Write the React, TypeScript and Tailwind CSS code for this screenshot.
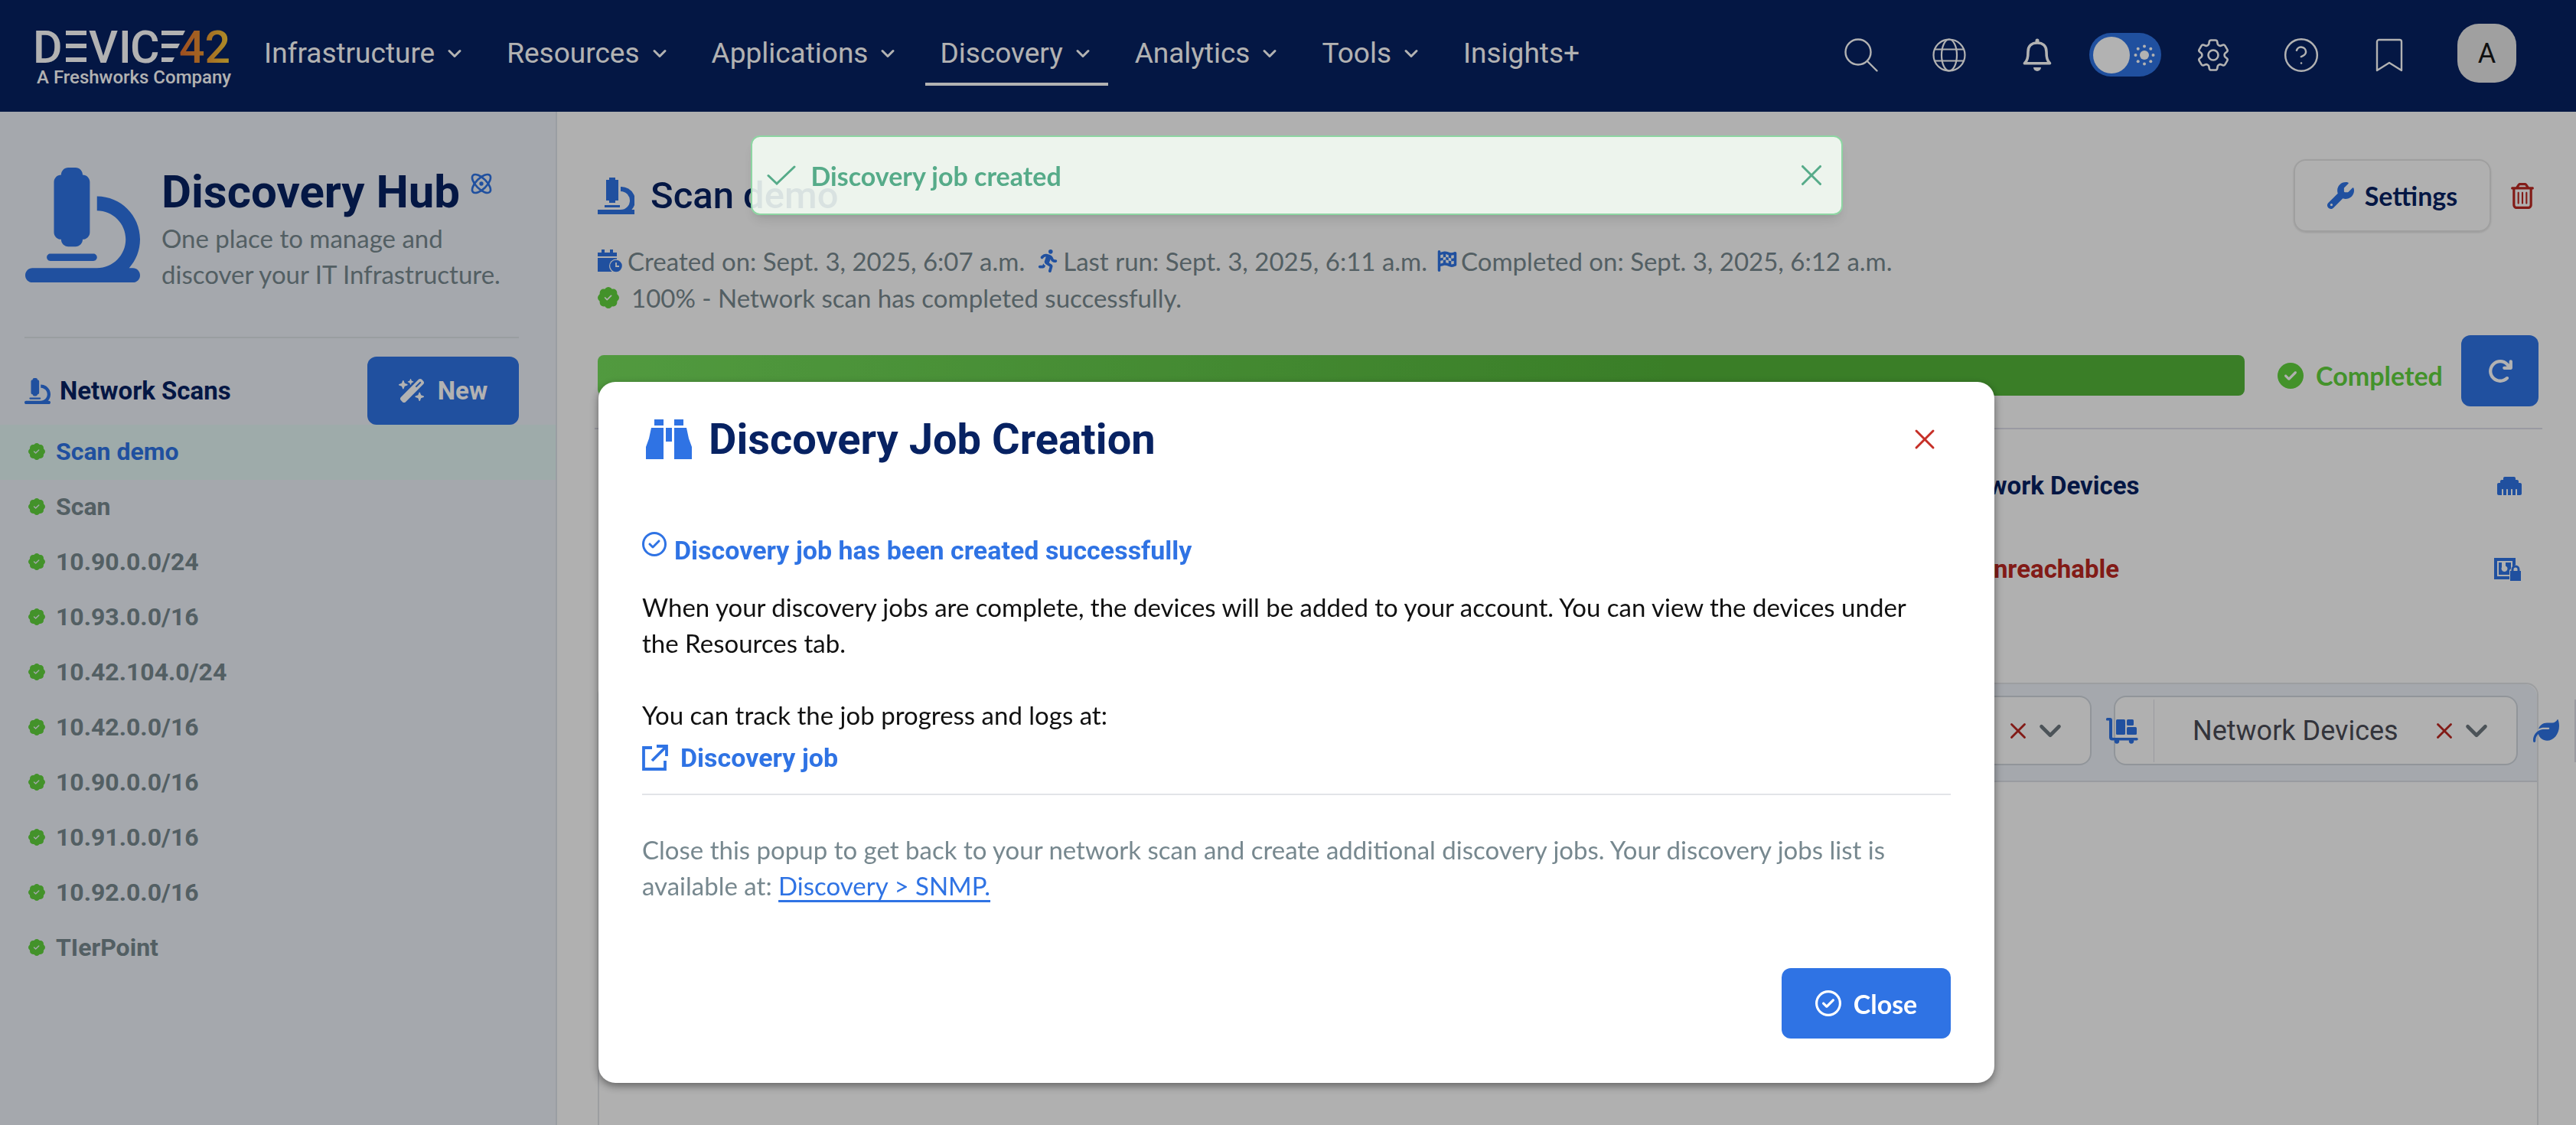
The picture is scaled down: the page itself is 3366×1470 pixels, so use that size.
import React from "react";
import type { ReactNode } from "react";
import { Atom, ChevronDown, CircleQuestionMark, X } from "lucide-react";
import {
  FaArrowRotateRight,
  FaCircleCheck,
  FaEthernet,
  FaFlagCheckered,
  FaLeaf,
  FaMicroscope,
  FaPersonRunning,
  FaRegCircleCheck,
  FaRegTrashCan,
  FaWandMagicSparkles,
  FaWrench,
} from "react-icons/fa6";
import { BsPatchCheckFill } from "react-icons/bs";
import { HiOutlineCog6Tooth } from "react-icons/hi2";

type IconProps = { className?: string };

function Logo() {
  return (
    <svg className="h-[44px] w-[252px] overflow-visible" viewBox="0 0 252 44" fill="#fff" role="img" aria-label="Device42">
      <defs>
        <linearGradient id="logo-warm" x1="0" y1="0" x2="1" y2="0">
          <stop offset="0" stopColor="#e5702f" />
          <stop offset="0.500" stopColor="#ea9632" />
          <stop offset="1" stopColor="#fbcf3a" />
        </linearGradient>
      </defs>
      <g fontFamily="Roboto, sans-serif" fontWeight="500" fontSize="59">
        <text x="-5" y="43">D</text>
        <text x="68" y="43">V</text>
        <text x="107" y="43">I</text>
        <text x="122" y="43">C</text>
        <text x="186" y="43" fill="url(#logo-warm)">42</text>
      </g>
      <path d="M38 1h27v6H38zM38 18h27v6H38zM38 36h27v6H38z" />
      <path d="M163 1h31l-3 6h-28zM163 18h24l-3 6h-21zM163 36h17l-3 6h-14z" />
    </svg>
  );
}

function SearchIcon() {
  return (
    <svg className="size-11" viewBox="0 0 44 44" fill="none" stroke="currentColor" strokeWidth="2.4" strokeLinecap="round">
      <circle cx="18" cy="18" r="16.5" />
      <path d="M30 30l12.500 12.500" />
    </svg>
  );
}

function GlobeIcon() {
  return (
    <svg className="size-11" viewBox="0 0 44 44" fill="none" stroke="currentColor" strokeWidth="2.200">
      <circle cx="22" cy="22" r="20.500" />
      <ellipse cx="22" cy="22" rx="10" ry="20.500" />
      <path d="M3 14.500h38M3 29.500h38" />
    </svg>
  );
}

function BellIcon() {
  return (
    <svg className="h-11 w-[38px]" viewBox="0 0 38 44" fill="none" stroke="currentColor">
      <path d="M2.500 32.800h33c-3.500-4-4.500-7-4.500-15.300C31 10 26 6 19 6S7 10 7 17.500c0 8.300-1 11.300-4.500 15.300z" strokeWidth="3.600" strokeLinejoin="round" />
      <path d="M16.500 5V3a2.500 2.500 0 0 1 5 0v2z" fill="currentColor" stroke="none" />
      <path d="M14 38h10a5 5 0 0 1-10 0z" fill="currentColor" stroke="none" />
    </svg>
  );
}

function SunIcon() {
  return (
    <svg className="size-7" viewBox="0 0 28 28" fill="currentColor">
      <circle cx="14" cy="14" r="6" />
      <circle cx="14" cy="2.500" r="2" />
      <circle cx="14" cy="25.500" r="2" />
      <circle cx="2.500" cy="14" r="2" />
      <circle cx="25.500" cy="14" r="2" />
      <circle cx="5.700" cy="5.700" r="2" />
      <circle cx="22.300" cy="5.700" r="2" />
      <circle cx="5.700" cy="22.300" r="2" />
      <circle cx="22.300" cy="22.300" r="2" />
    </svg>
  );
}

function BookmarkIcon() {
  return (
    <svg className="h-11 w-9" viewBox="0 0 36 44" fill="none" stroke="currentColor" strokeWidth="2.400" strokeLinejoin="round">
      <path d="M2 42V4.500A2.500 2.500 0 0 1 4.500 2h27A2.500 2.500 0 0 1 34 4.500V42L18 32z" />
    </svg>
  );
}

function SharpMicroscope({ className }: IconProps) {
  return (
    <svg className={className} viewBox="0 0 48 48" fill="currentColor">
      <path d="M15 0h8v3h4v27h-4v3h-8v-3h-4V3h4zM9 36h20v3H9z" />
      <path d="M30 12a18 18 0 0 1 14.400 30H48v6H0v-6h30a12 12 0 0 0 0-24z" />
    </svg>
  );
}

function CalendarClock({ className }: IconProps) {
  return (
    <svg className={className} viewBox="0 0 32 30">
      <path fill="currentColor" d="M5 0h4v4h7V0h4v4h5v5H0V4h5zM0 11h25v2a9 9 0 0 0-7.500 14.500L19 29H0z" />
      <circle cx="24" cy="21.500" r="9" fill="#fdfdfd" />
      <circle cx="24" cy="21.500" r="7.800" fill="currentColor" />
      <path d="M24 17v5h4" fill="none" stroke="#fdfdfd" strokeWidth="1.800" />
    </svg>
  );
}

function Binoculars({ className }: IconProps) {
  return (
    <svg className={className} viewBox="0 0 60 52" fill="currentColor">
      <path d="M11 0h12v8H11zM37 0h12v8H37zM7 11h16v41H0V36l4-11zM26 11h8v18h-8zM37 11h16l3 14 4 11v16H37z" />
    </svg>
  );
}

function ExternalLink({ className }: IconProps) {
  return (
    <svg className={className} viewBox="0 0 34 34" fill="none" stroke="currentColor" strokeWidth="3.800">
      <path d="M13 4H2v28h28V21M19 2h13v13M32 2L13 21" />
    </svg>
  );
}

function VaultLock({ className }: IconProps) {
  return (
    <svg className={className} viewBox="0 0 36 30" fill="currentColor">
      <path fillRule="evenodd" d="M0 0h28v9a8 8 0 0 0-4 4V4H4v20h16v4H0zM6 6h4v6a4 4 0 1 0 7 0l-2-1.500V6h7v8l-2 2v6H6z" />
      <path fillRule="evenodd" d="M21 17h1.500v-2a5.500 5.500 0 0 1 11 0v2H35v13H21zm4.500 0h5v-2a2.500 2.500 0 0 0-5 0z" />
    </svg>
  );
}

function Flatbed({ className }: IconProps) {
  return (
    <svg className={className} viewBox="0 0 42 34" fill="currentColor">
      <path d="M0 1.500A1.500 1.500 0 0 1 1.500 0H5a3 3 0 0 1 3 3v22a1 1 0 0 0 1 1h31a1.500 1.500 0 0 1 0 3.500h-4a3.200 3.200 0 1 1-6 0H17a3.200 3.200 0 1 1-6 0H8a4 4 0 0 1-4-4V3.500H1.500A1.500 1.500 0 0 1 0 1.500z" />
      <rect x="13" y="2" width="12" height="20" rx="1.500" />
      <rect x="27" y="2" width="9" height="8" rx="1.500" />
      <rect x="27" y="12" width="13" height="10" rx="1.500" />
    </svg>
  );
}

const navItems = ["Infrastructure", "Resources", "Applications", "Discovery", "Analytics", "Tools"];

function IconSlot({ label, children }: { label: string; children: ReactNode }) {
  return (
    <button type="button" aria-label={label} className="flex w-[115px] shrink-0 justify-center">
      {children}
    </button>
  );
}

function TopBar() {
  return (
    <header className="flex h-[146px] shrink-0 justify-between bg-[#072262] pr-[78px] pl-12 font-[Roboto,sans-serif] text-white shadow-[0_2px_2px_rgba(0,0,0,0.12)]">
      <div className="flex">
        <a href="#home" className="pt-[39px]">
          <Logo />
          <span className="block text-[24px] leading-[36px] font-medium">A Freshworks Company</span>
        </a>
        <nav className="flex items-start gap-4 pt-8 pl-6">
          {navItems.map((item) => (
            <a
              key={item}
              href={"#" + item}
              className={
                item === "Discovery"
                  ? "flex h-20 items-center gap-3 border-b-4 border-white px-[19px] text-[37px]"
                  : "flex h-20 items-center gap-3 border-b-4 border-transparent px-[19px] text-[37px]"
              }
            >
              {item}
              <ChevronDown className="size-7" strokeWidth={2.6} />
            </a>
          ))}
          <a href="#insights" className="flex h-20 items-center border-b-4 border-transparent px-[19px] text-[37px]">
            Insights+
          </a>
        </nav>
      </div>
      <div className="flex h-[143px] items-center">
        <IconSlot label="Search"><SearchIcon /></IconSlot>
        <IconSlot label="Language"><GlobeIcon /></IconSlot>
        <IconSlot label="Notifications"><BellIcon /></IconSlot>
        <div className="flex w-[115px] justify-center">
          <button
            type="button"
            role="switch"
            aria-checked="false"
            aria-label="Theme"
            className="flex h-[57px] w-[94px] items-center justify-between rounded-full bg-[#2f73e4] pr-2 pl-[5px]"
          >
            <span className="size-12 rounded-full bg-white" />
            <SunIcon />
          </button>
        </div>
        <IconSlot label="Settings"><HiOutlineCog6Tooth className="size-[52px]" strokeWidth={1.2} /></IconSlot>
        <IconSlot label="Help"><CircleQuestionMark className="size-[50px]" strokeWidth={1.2} /></IconSlot>
        <IconSlot label="Bookmarks"><BookmarkIcon /></IconSlot>
        <button type="button" className="mb-1 ml-8 flex size-[77px] items-center justify-center rounded-[28px] bg-[#e5e5e6] text-4xl text-[#181818]">
          A
        </button>
      </div>
    </header>
  );
}

const scans = [
  "Scan demo",
  "Scan",
  "10.90.0.0/24",
  "10.93.0.0/16",
  "10.42.104.0/24",
  "10.42.0.0/16",
  "10.90.0.0/16",
  "10.91.0.0/16",
  "10.92.0.0/16",
  "TIerPoint",
];

function Sidebar() {
  return (
    <aside className="w-[728px] shrink-0 border-r-2 border-[#dde2ea] bg-[#ecf1f8]">
      <div className="flex pt-[70px] pl-[33px]">
        <FaMicroscope className="mt-[3px] size-[150px] shrink-0 text-[#2f73e4]" />
        <div className="pl-7">
          <div className="flex items-start gap-3">
            <h1 className="font-[Roboto,sans-serif] text-[60px] leading-[70px] font-bold text-[#072262]">Discovery Hub</h1>
            <Atom className="mt-2 size-8 text-[#2f73e4]" strokeWidth={2} />
          </div>
          <p className="mt-[2px] w-[470px] text-[33px] leading-[47px] text-[#77888f]">
            One place to manage and discover your IT Infrastructure.
          </p>
        </div>
      </div>
      <hr className="mt-[58px] mr-12 ml-8 border-t-2 border-[#dce2e6]" />
      <div className="mt-6 flex items-center justify-between pr-12 pl-8">
        <h2 className="flex items-center gap-3 font-[Roboto,sans-serif] text-[33px] leading-12 font-bold text-[#072262]">
          <FaMicroscope className="size-[34px] text-[#2f73e4]" />
          Network Scans
        </h2>
        <button type="button" className="flex h-[89px] w-[198px] items-center justify-center gap-4 rounded-xl bg-[#2f73e4] font-[Roboto,sans-serif] text-[33px] font-bold text-white">
          <FaWandMagicSparkles className="size-[35px]" />
          New
        </button>
      </div>
      <ul>
        {scans.map((scan, i) => (
          <li key={scan} className={i === 0 ? "bg-[#e3f5f4] text-[#2f73e4]" : "text-[#77888f]"}>
            <a href="#scan" className="flex h-[72px] items-center gap-[14px] pb-[2px] pl-[37px] font-[Roboto,sans-serif] text-[32px] font-bold">
              <BsPatchCheckFill className="size-[22px] text-[#61d23d]" />
              {scan}
            </a>
          </li>
        ))}
      </ul>
    </aside>
  );
}

function FilterSelect({ id, icon, label }: { id: string; icon: ReactNode; label: string }) {
  return (
    <div className="relative flex h-[91px] w-[528px] shrink-0 items-center rounded-2xl border-2 border-[#d0d6dd] bg-[#fdfdfd]">
      <span className="absolute -left-3 text-[#2f73e4]">{icon}</span>
      <span className="ml-[50px] h-[82px] w-px bg-[#dddde6]" />
      <select
        id={id}
        aria-label={label}
        className="ml-[50px] w-[300px] appearance-none bg-transparent font-[Roboto,sans-serif] text-4xl text-[#4a4b55]"
      >
        <option>{label}</option>
      </select>
      <button type="button" aria-label="Clear" className="ml-3 text-[#bb2721]">
        <X className="size-[34px]" strokeWidth={2} />
      </button>
      <ChevronDown className="ml-[2px] size-[46px] text-[#6d787f]" strokeWidth={2.4} />
    </div>
  );
}

function MainContent() {
  return (
    <main className="flex min-w-0 flex-1 flex-col bg-[#fdfdfd] pt-[62px] pr-[49px] pl-[53px]">
      <div className="flex h-[95px] items-center justify-between">
        <h2 className="flex items-center gap-[21px] font-[Roboto,sans-serif] text-[49px] font-medium text-[#072262]">
          <SharpMicroscope className="size-12 text-[#2f73e4]" />
          Scan demo
        </h2>
        <div className="flex items-center gap-[24px]">
          <button
            type="button"
            className="flex h-[95px] w-[258px] items-center justify-center gap-[14px] rounded-2xl border-2 border-[#e4e4e4] text-[34px] font-bold text-[#072262] shadow-sm"
          >
            <FaWrench className="size-[35px] text-[#2f73e4]" />
            Settings
          </button>
          <button type="button" aria-label="Delete scan" className="mr-1 text-[#bb2721]">
            <FaRegTrashCan className="size-[34px]" />
          </button>
        </div>
      </div>
      <div className="mt-[14px] flex items-center text-[33px] leading-12 text-[#77888f]">
        <CalendarClock className="mr-[7px] h-[30px] w-8 text-[#2f73e4]" />
        Created on: Sept. 3, 2025, 6:07 a.m.
        <FaPersonRunning className="mr-1 ml-4 size-[30px] text-[#2f73e4]" />
        Last run: Sept. 3, 2025, 6:11 a.m.
        <FaFlagCheckered className="mr-1 ml-3 size-7 text-[#2f73e4]" />
        Completed on: Sept. 3, 2025, 6:12 a.m.
      </div>
      <div className="flex items-center gap-4 text-[33px] leading-12 text-[#77888f]">
        <BsPatchCheckFill className="size-7 text-[#61d23d]" />
        100% - Network scan has completed successfully.
      </div>
      <div className="mt-[25px] flex items-start">
        <div
          role="progressbar"
          aria-label="Scan progress"
          aria-valuenow={100}
          className="mt-[26px] h-[53px] flex-1 rounded-lg bg-linear-to-r from-[#75dd5b] to-[#53b539] to-65%"
        />
        <div className="mt-[26px] ml-[43px] flex h-[53px] w-[217px] items-center gap-4 overflow-hidden text-[34px] font-bold text-[#61d23d]">
          <FaCircleCheck className="size-[34px] shrink-0" />
          Completed
        </div>
        <button type="button" aria-label="Refresh" className="ml-[23px] flex h-[93px] w-[101px] items-center justify-center rounded-xl bg-[#2f73e4] text-white">
          <FaArrowRotateRight className="size-[34px]" />
        </button>
      </div>
      <hr className="mt-[28px] -mr-[5px] -ml-1 border-t-2 border-[#dddde8]" />
      <div className="mt-[50px] flex flex-col gap-[61px] pr-[22px] font-[Roboto,sans-serif] text-[33px] leading-12 font-bold">
        <div className="flex items-center justify-end">
          <h3 className="w-[717px] text-[#072262]">Network Devices</h3>
          <FaEthernet className="size-8 text-[#2f73e4]" />
        </div>
        <div className="flex items-center justify-end">
          <h3 className="w-[715px] text-[#bb2721]">IP Unreachable</h3>
          <VaultLock className="h-[30px] w-9 text-[#2f73e4]" />
        </div>
      </div>
      <section className="mt-[124px] flex-1 rounded-t-2xl border-2 border-b-0 border-[#e0e2e6]">
        <div className="flex justify-end gap-[29px] rounded-t-2xl border-b-2 border-[#dcdfe6] bg-[#ecf1f8] pt-[15px] pr-[25px] pb-5">
          <FilterSelect id="type" icon={<FaLeaf className="size-8" />} label="Operating System" />
          <div className="relative flex">
            <FilterSelect id="devices" icon={<Flatbed className="h-[34px] w-[42px]" />} label="Network Devices" />
            <div className="absolute top-[5px] left-full flex h-[82px] w-[76px] items-center justify-between border-r-2 border-[#dddde6] pl-5">
              <FaLeaf className="size-[34px] shrink-0 text-[#2f73e4]" />
            </div>
          </div>
        </div>
      </section>
    </main>
  );
}

function JobDialog() {
  return (
    <div
      role="dialog"
      aria-modal="true"
      aria-labelledby="dialog-title"
      className="w-[1824px] rounded-[22px] bg-white px-[57px] pt-[42px] pb-[58px] text-[33px] leading-[47px] text-[#111] shadow-[0_4px_12px_rgba(0,0,0,0.45)]"
    >
      <div className="flex items-center justify-between">
        <h2 id="dialog-title" className="flex items-center gap-[22px] pl-[5px] font-[Roboto,sans-serif] text-[56px] leading-[66px] font-bold text-[#072262]">
          <Binoculars className="h-[52px] w-[60px] text-[#2f73e4]" />
          Discovery Job Creation
        </h2>
        <button type="button" aria-label="Close dialog" className="mr-3 text-[#c62f27]">
          <X className="size-[44px]" strokeWidth={1.6} />
        </button>
      </div>
      <div className="mt-[88px] flex items-start gap-[10px] font-[Roboto,sans-serif] text-[34px] leading-12 font-bold text-[#2f73e4]">
        <FaRegCircleCheck className="size-8 shrink-0" />
        Discovery job has been created successfully
      </div>
      <p className="mt-[27px] pr-5">
        When your discovery jobs are complete, the devices will be added to your account. You can view the devices under the Resources tab.
      </p>
      <p className="mt-[47px]">You can track the job progress and logs at:</p>
      <a href="#job" className="mt-2 flex items-center gap-4 font-[Roboto,sans-serif] text-[34px] leading-12 font-bold text-[#2f73e4]">
        <ExternalLink className="size-[34px]" />
        Discovery job
      </a>
      <hr className="mt-[23px] border-t-2 border-[#e2e4e8]" />
      <p className="mt-[48px] text-[#77888f]">
        Close this popup to get back to your network scan and create additional discovery jobs. Your discovery jobs list is available at:{" "}
        <a href="#snmp" className="text-[#2f73e4] underline decoration-3 underline-offset-[6px]">Discovery &gt; SNMP.</a>
      </p>
      <div className="mt-[84px] flex justify-end">
        <button type="button" className="flex h-[92px] w-[221px] items-center justify-center gap-4 rounded-xl bg-[#2f73e4] text-[34px] font-bold text-white">
          <FaRegCircleCheck className="size-[34px]" />
          Close
        </button>
      </div>
    </div>
  );
}

function Toast() {
  return (
    <div role="status" className="flex h-[104px] w-[1427px] items-center rounded-xl border-2 border-[#8dd5a2] bg-[#f4fcf4]/89 pr-4 pl-[19px] text-[34px] font-bold text-[#56ab89] shadow-lg">
      <svg className="mr-5 h-7 w-[38px]" viewBox="0 0 38 28" fill="none" stroke="currentColor" strokeWidth="3" strokeLinecap="round">
        <path d="M2 14.500l11 10.500L36 3" />
      </svg>
      Discovery job created
      <button type="button" aria-label="Dismiss" className="ml-auto">
        <X className="size-[46px]" strokeWidth={1.6} />
      </button>
    </div>
  );
}

export default function App() {
  return (
    <div className="flex min-h-screen flex-col overflow-hidden font-[Lato,sans-serif]">
      <TopBar />
      <div className="flex flex-1">
        <Sidebar />
        <MainContent />
      </div>
      <div className="fixed inset-0 flex flex-col items-center bg-black/30 pt-[177px] pl-[22px]">
        <Toast />
        <div className="mt-[218px]">
          <JobDialog />
        </div>
      </div>
    </div>
  );
}
